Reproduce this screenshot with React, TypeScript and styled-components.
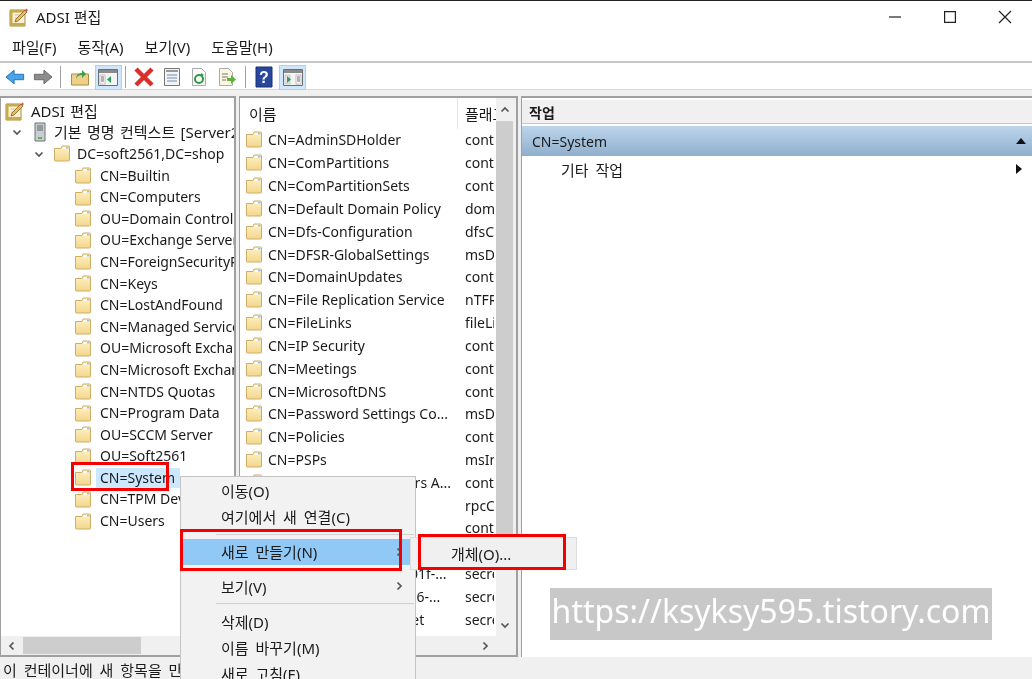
import React from "react";
import styled, { createGlobalStyle } from "styled-components";

const Global = createGlobalStyle`
  html, body { margin: 0; padding: 0; background: #fff; }
  * { box-sizing: border-box; }
  body { font-family: "Noto Sans", "Noto Sans CJK KR", sans-serif; font-size: 14px; color: #1a1a1a; }
`;

const Page = styled.div`
  position: relative; width: 1032px; height: 679px; overflow: hidden;
  display: flex; flex-direction: column; background: #fff; border-top: 1px solid #222;
  filter: blur(0.3px);
`;
const TitleBar = styled.div`
  height: 33px; display: flex; align-items: center; padding: 0 0 2px 9px; gap: 7px; font-size: 15px;
`;
const WindowButtons = styled.div`margin-left: auto; display: flex;`;
const WinBtn = styled.div`
  width: 55px; height: 32px; display: flex; align-items: center; justify-content: center;
`;
const MenuBar = styled.div`
  height: 29px; display: flex; align-items: center; padding: 0 0 2px 12px; gap: 21px; font-size: 15px;
  border-bottom: 2px solid #c8c8c8;
`;
const ToolBar = styled.div`
  height: 27px; display: flex; align-items: center; padding: 2px 0 0 5px; gap: 2px;
  border-bottom: 1px solid #d8d8d8;
`;
const ArrowSlot = styled.div<{ $w: number }>`width: ${(p) => p.$w}px; height: 20px; display: flex; flex: none;`;
const ToolBtn = styled.div<{ $on?: boolean }>`
  width: ${(p) => (p.$on ? 27 : 25.5)}px; height: 25px; display: flex; align-items: center; justify-content: center; flex: none;
  background: ${(p) => (p.$on ? "#cfe6fb" : "transparent")};
  border: 1px solid ${(p) => (p.$on ? "#a8d2f5" : "transparent")};
`;
const ToolSep = styled.div<{ $ml?: number }>`
  width: 1px; height: 22px; background: #a0a0a0; flex: none;
  margin: 0 4px 0 ${(p) => p.$ml ?? 1}px;
`;
const Workspace = styled.div`
  flex: 1; min-height: 0; background: #f0f0f0; padding-top: 6px;
  display: grid; grid-template-columns: 236px 279px 1fr; column-gap: 3px;
`;
const Pane = styled.div<{ $open?: boolean }>`
  position: relative; background: #fff; border-top: 2px solid #a0a0a0; border-left: 1px solid #a0a0a0;
  border-right: ${(p) => (p.$open ? "0" : "2px solid #a0a0a0")};
  border-bottom: ${(p) => (p.$open ? "0" : "2px solid #a0a0a0")}; min-width: 0;
  display: flex; flex-direction: column; overflow: hidden;
`;
const TreeBody = styled.div`flex: 1; min-height: 0; padding-top: 2px; overflow: hidden;`;
const TreeRow = styled.div<{ $depth: number }>`
  height: 21.6px; display: flex; align-items: center; white-space: nowrap; font-size: 14px;
  padding-left: ${(p) => p.$depth}px;
`;
const Twisty = styled.div`width: 15px; height: 16px; display: flex; align-items: center; justify-content: center; flex: none;`;
const RowIcon = styled.div<{ $w: number; $pad?: number }>`
  width: ${(p) => p.$w}px; padding-left: ${(p) => p.$pad ?? 0}px; flex: none; display: flex; align-items: center;
`;
const RowLabel = styled.span<{ $sel?: boolean; $kr?: boolean; $gap?: number }>`
  background: ${(p) => (p.$sel ? "#cce8ff" : "transparent")};
  padding: 0 5px 0 ${(p) => p.$gap ?? 0}px; line-height: 20px;
  font-size: ${(p) => (p.$kr ? 15 : 14)}px; word-spacing: ${(p) => (p.$kr ? 1.5 : 0)}px;
`;
const ScrollH = styled.div<{ $end?: boolean }>`
  height: 19px; flex: none; background: #f0f0f0; display: flex; align-items: center;
  justify-content: ${(p) => (p.$end ? "flex-end" : "flex-start")}; padding-right: ${(p) => (p.$end ? 20 : 0)}px;
`;
const ScrollArrow = styled.div`width: 22px; flex: none; display: flex; justify-content: center; align-items: center;`;
const ScrollThumbH = styled.div`width: 118px; height: 17px; background: #cdcdcd;`;
const ListWrap = styled.div`flex: 1; min-height: 0; display: flex;`;
const ListMain = styled.div`flex: 1; min-width: 0; overflow: hidden; background: #fff;`;
const ListHeader = styled.div`height: 30.5px; display: grid; grid-template-columns: 217px 1fr; align-items: center;`;
const HeaderCell = styled.div<{ $divider?: boolean }>`
  height: 100%; display: flex; align-items: center; padding-left: ${(p) => (p.$divider ? 7 : 9)}px;
  border-left: ${(p) => (p.$divider ? "1px solid #e5e5e5" : "0")}; overflow: hidden; white-space: nowrap; font-size: 15px;
`;
const ListRow = styled.div`
  height: 22.83px; display: grid; grid-template-columns: 217px 1fr; align-items: center; white-space: nowrap;
  font-size: 14px;
`;
const NameCell = styled.div`display: flex; align-items: center; padding-left: 5px; overflow: hidden;`;
const ClassCell = styled.div`margin-left: 8px; margin-right: 2px; overflow: hidden;`;
const ScrollV = styled.div`width: 20px; flex: none; background: #f0f0f0; display: flex; flex-direction: column;`;
const ScrollThumbV = styled.div`width: 17px; height: 414px; background: #cdcdcd;`;
const ScrollEnd = styled.div`width: 17px; height: 23px; flex: none; display: flex; align-items: center; justify-content: center;`;
const ScrollFill = styled.div`flex: 1;`;
const ActionsTitle = styled.div`
  height: 26px; background: #f0f0f0; border-top: 2px solid #fff; border-bottom: 1px solid #c8c8c8;
  padding-left: 7px; display: flex; align-items: center; font-weight: 700; font-size: 14px;
`;
const ActionsSection = styled.div`
  margin-top: 2px; height: 30px; display: flex; align-items: center; justify-content: space-between;
  padding: 0 6px 0 10px; background: linear-gradient(#bdd5eb, #90afcd); font-size: 14px;
`;
const ActionItem = styled.div`
  height: 26px; display: flex; align-items: center; justify-content: space-between;
  padding: 0 10px 0 39px; font-size: 15px; word-spacing: 3px;
`;
const StatusBar = styled.div`
  height: 22px; flex: none; background: #f0f0f0; padding: 2px 0 0 3px; font-size: 15px; word-spacing: 3px; white-space: nowrap; overflow: hidden;
`;
const ContextMenu = styled.div`
  position: absolute; left: 180px; top: 475px; width: 236px; height: 220px;
  background: #f2f2f2; border: 1px solid #c4c4c4;
`;
const MenuItem = styled.div<{ $hover?: boolean }>`
  height: 26.3px; display: flex; align-items: center; justify-content: space-between;
  padding: 0 11px 0 40px; font-size: 15px; word-spacing: 3px; background: ${(p) => (p.$hover ? "#90c8f6" : "transparent")};
`;
const MenuSep = styled.div<{ $blank?: boolean }>`
  height: 1px; background: ${(p) => (p.$blank ? "transparent" : "#d0d0d0")};
  margin: ${(p) => (p.$blank ? "3px" : "4px")} 1px 4px 35px;
`;
const SubMenu = styled.div`
  position: absolute; left: 410px; top: 536px; width: 167px; height: 33px; background: #f0f0f0;
  border: 1px solid #dcdcdc; display: flex; align-items: center; padding-left: 40px; font-size: 15px;
`;
const RedBox = styled.div<{ $l: number; $t: number; $w: number; $h: number }>`
  position: absolute; left: ${(p) => p.$l}px; top: ${(p) => p.$t}px; width: ${(p) => p.$w}px; height: ${(p) => p.$h}px;
  border: 3px solid #f40000; pointer-events: none;
`;
const Watermark = styled.div`
  position: absolute; left: 550px; top: 587px; width: 442px; height: 52px; background: #c8c8c8; color: #fff;
  font-size: 32px; padding-bottom: 7px; display: flex; align-items: center; justify-content: center; white-space: nowrap;
  font-family: "Noto Sans", sans-serif;
`;

const Folder = () => (
  <svg width="18" height="17" viewBox="0 0 18 17">
    <defs>
      <linearGradient id="fg" x1="0" y1="0" x2="0" y2="1"><stop offset="0" stopColor="#fdf2c4" /><stop offset="1" stopColor="#f3d68c" /></linearGradient>
    </defs>
    <path d="M1.5 3.5V15a1 1 0 0 0 1 1h13a1 1 0 0 0 1-1V2a1 1 0 0 0-1-1H9L8 3.5Z" fill="url(#fg)" stroke="#d0ad66" />
    <path d="M9.5 2h6v2h-6z" fill="#fff" opacity=".8" />
    <path d="M13 2h2.500v1.500H13z" fill="#8cc0e8" />
  </svg>
);
const Chevron = ({ dir, color = "#555", size = 10 }: { dir: "l" | "r" | "u" | "d"; color?: string; size?: number }) => {
  const d = { l: "M6.500 1.500 3 5l3.500 3.500", r: "M3.500 1.500 7 5 3.500 8.500", u: "M1.500 6.500 5 3l3.500 3.500", d: "M1.500 3.500 5 7l3.500-3.500" }[dir];
  return <svg width={size} height={size} viewBox="0 0 10 10"><path d={d} fill="none" stroke={color} strokeWidth="1.700" /></svg>;
};
const Notebook = ({ s = 20 }: { s?: number }) => (
  <svg width={s} height={s} viewBox="0 0 20 20">
    <path d="M1 3h15v16H1z" fill="#f9f1cf" stroke="#a58a3c" />
    <path d="M1 3h15v2.500H3.500V16H16v3H1z" fill="#c9a94e" />
    <path d="M6 8h6M6 11h4" stroke="#c6c6ae" />
    <path d="m6 15 1-3 9-9 2 2-9 9Z" fill="#e7c05a" stroke="#8a5a2b" strokeWidth=".8" />
    <path d="m15.500 3.500 2-2 1.500 1.500-2 2Z" fill="#d9534f" />
  </svg>
);
const Server = () => (
  <svg width="14" height="20" viewBox="0 0 14 20">
    <path d="M2 1h10v18H2z" fill="#c9ced3" stroke="#6b7278" />
    <path d="M4 4h6M4 6h6M4 8h6" stroke="#5d6469" />
    <path d="M5 15h4v2H5z" fill="#63b04b" />
  </svg>
);
const Arrow = ({ left, color, edge }: { left?: boolean; color: string; edge: string }) => (
  <svg width="20" height="20" viewBox="0 0 22 20" style={{ transform: left ? "none" : "scaleX(-1)" }}>
    <path d="M1 10 10 2.500V7h10.500v6H10v4.500Z" fill={color} stroke={edge} />
  </svg>
);
const PanelIcon = ({ right }: { right?: boolean }) => (
  <svg width="22" height="20" viewBox="0 0 22 20">
    <path d="M1.500 2.500h19v16h-19z" fill="#f4f4f4" stroke="#6f6f6f" />
    <path d="M2 3h18v3H2z" fill="#8a8a8a" />
    {right ? (
      <>
        <path d="M3 8h5v9H3z" fill="#e8e8e8" stroke="#aaa" strokeWidth=".5" />
        <path d="m5 9 4 3.500L5 16Z" fill="#2aa05a" />
        <path d="M14 8h5v9h-5z" fill="#fff" stroke="#888" strokeWidth=".5" />
        <path d="M15 10h3M15 12h3M15 14h3" stroke="#667" />
      </>
    ) : (
      <>
        <path d="M3 8h5v9H3z" fill="#fff" stroke="#888" strokeWidth=".5" />
        <path d="M4 10h3M4 12h3M4 14h3" stroke="#667" />
        <path d="M14 9l-4 3.500 4 3.500Z" fill="#2aa05a" />
      </>
    )}
  </svg>
);

const treeItems = [
  "CN=Builtin", "CN=Computers", "OU=Domain Controllers", "OU=Exchange Servers", "CN=ForeignSecurityPrincipals",
  "CN=Keys", "CN=LostAndFound", "CN=Managed Service Accounts", "OU=Microsoft Exchange", "CN=Microsoft Exchange System",
  "CN=NTDS Quotas", "CN=Program Data", "OU=SCCM Server", "OU=Soft2561", "CN=System", "CN=TPM Devices", "CN=Users",
];
const listItems: [string, string][] = [
  ["CN=AdminSDHolder", "container"], ["CN=ComPartitions", "container"], ["CN=ComPartitionSets", "container"],
  ["CN=Default Domain Policy", "domainPolicy"], ["CN=Dfs-Configuration", "dfsConfiguration"],
  ["CN=DFSR-GlobalSettings", "msDFSR"], ["CN=DomainUpdates", "container"], ["CN=File Replication Service", "nTFRSSettings"],
  ["CN=FileLinks", "fileLinkTracking"], ["CN=IP Security", "container"], ["CN=Meetings", "container"],
  ["CN=MicrosoftDNS", "container"], ["CN=Password Settings Co...", "msDS-Password"], ["CN=Policies", "container"],
  ["CN=PSPs", "msImaging"], ["CN=RAS and IAS Servers A...", "container"], ["CN=RpcServices", "rpcContainer"],
  ["CN=WinsockServices", "container"], ["CN=WMIPolicy", "container"], ["CN=BCKUPKEY_a5c1e01f-...", "secret"],
  ["CN=BCKUPKEY_3f1eab6-...", "secret"], ["CN=BCKUPKEY_P Secret", "secret"],
];

export default function App() {
  return (
    <Page>
      <Global />
      <TitleBar>
        <Notebook />
        <span>ADSI 편집</span>
        <WindowButtons>
          <WinBtn><svg width="12" height="12" viewBox="0 0 12 12"><path d="M0 6h12" stroke="#222" strokeWidth="1.200" /></svg></WinBtn>
          <WinBtn><svg width="12" height="12" viewBox="0 0 12 12"><path d="M.6.6h10.800v10.800H.6z" fill="none" stroke="#222" strokeWidth="1.200" /></svg></WinBtn>
          <WinBtn><svg width="14" height="14" viewBox="0 0 14 14"><path d="m1 1 12 12M13 1 1 13" stroke="#222" strokeWidth="1.200" /></svg></WinBtn>
        </WindowButtons>
      </TitleBar>
      <MenuBar>
        <span>파일(F)</span><span>동작(A)</span><span>보기(V)</span><span>도움말(H)</span>
      </MenuBar>
      <ToolBar>
        <ArrowSlot $w={26}><Arrow left color="#4ba3e8" edge="#1f6fb5" /></ArrowSlot>
        <ArrowSlot $w={24}><Arrow color="#8c8c8c" edge="#666" /></ArrowSlot>
        <ToolSep />
        <ToolBtn><svg width="20" height="20" viewBox="0 0 20 20"><path d="M1.500 7h17v11h-17z" fill="#eed08a" stroke="#b08c45" /><path d="M6 12c0-4 3-6 6-6V3l4 4-4 4V8c-3 0-5 1-6 4Z" fill="#3da045" /></svg></ToolBtn>
        <ToolBtn $on><PanelIcon /></ToolBtn>
        <ToolSep />
        <ToolBtn><svg width="22" height="22" viewBox="0 0 22 22"><path d="m3 3 16 16M19 3 3 19" stroke="#d9302a" strokeWidth="4.500" /></svg></ToolBtn>
        <ToolBtn><svg width="20" height="20" viewBox="0 0 20 20"><path d="M2.500 1.500h15v17h-15z" fill="#f4f4f4" stroke="#777" /><path d="M4 3h12v2H4z" fill="#999" /><path d="M5 8h10M5 11h10M5 14h10" stroke="#6a8fb5" /></svg></ToolBtn>
        <ToolBtn><svg width="20" height="20" viewBox="0 0 20 20"><path d="M3.500 1.500h9l4 4v13h-13z" fill="#fafafa" stroke="#aaa" /><circle cx="10" cy="12" r="4" fill="none" stroke="#2f9a44" strokeWidth="2" /><path d="m12 6 3 2-3 2Z" fill="#2f9a44" /></svg></ToolBtn>
        <ToolBtn><svg width="20" height="20" viewBox="0 0 20 20"><path d="M2.500 1.500h9l4 4v13h-13z" fill="#fbf6e0" stroke="#aaa" /><path d="M5 7h6M5 10h6M5 13h4" stroke="#777" /><path d="M10 11h4V8l5 4.500-5 4.500v-3h-4Z" fill="#5cb53a" /></svg></ToolBtn>
        <ToolSep $ml={3} />
        <ToolBtn><svg width="18" height="22" viewBox="0 0 18 22"><path d="M1 1h16v20H1z" fill="#27479f" stroke="#1a2f70" /><text x="9" y="17" fontSize="16" fontWeight="700" fill="#fff" textAnchor="middle" fontFamily="Liberation Sans">?</text></svg></ToolBtn>
        <ToolBtn $on><PanelIcon right /></ToolBtn>
      </ToolBar>
      <Workspace>
        <Pane>
          <TreeBody>
            <TreeRow $depth={4}><RowIcon $w={26}><Notebook /></RowIcon><RowLabel $kr>ADSI 편집</RowLabel></TreeRow>
            <TreeRow $depth={8}><Twisty><Chevron dir="d" /></Twisty><RowIcon $w={30} $pad={9}><Server /></RowIcon><RowLabel $kr>기본 명명 컨텍스트 [Server2019]</RowLabel></TreeRow>
            <TreeRow $depth={30}><Twisty><Chevron dir="d" /></Twisty><RowIcon $w={31} $pad={7}><Folder /></RowIcon><RowLabel>DC=soft2561,DC=shop</RowLabel></TreeRow>
            {treeItems.map((t) => (
              <TreeRow key={t} $depth={73}>
                <RowIcon $w={22}>
                  <Folder />
                </RowIcon>
                <RowLabel $sel={t === "CN=System"} $gap={4}>{t}</RowLabel>
              </TreeRow>
            ))}
          </TreeBody>
          <ScrollH>
            <ScrollArrow><Chevron dir="l" /></ScrollArrow>
            <ScrollThumbH />
          </ScrollH>
        </Pane>
        <Pane>
          <ListWrap>
            <ListMain>
              <ListHeader>
                <HeaderCell>이름</HeaderCell>
                <HeaderCell $divider>플래그</HeaderCell>
              </ListHeader>
              {listItems.map(([n, c]) => (
                <ListRow key={n}>
                  <NameCell><RowIcon $w={23}><Folder /></RowIcon>{n}</NameCell>
                  <ClassCell>{c}</ClassCell>
                </ListRow>
              ))}
            </ListMain>
            <ScrollV>
              <ScrollEnd><Chevron dir="u" /></ScrollEnd>
              <ScrollThumbV />
              <ScrollFill />
              <ScrollEnd><Chevron dir="d" /></ScrollEnd>
            </ScrollV>
          </ListWrap>
          <ScrollH $end>
            <ScrollArrow><Chevron dir="r" /></ScrollArrow>
          </ScrollH>
        </Pane>
        <Pane $open>
          <ActionsTitle>작업</ActionsTitle>
          <ActionsSection>
            <span>CN=System</span>
            <svg width="10" height="6" viewBox="0 0 10 6"><path d="M0 6 5 0l5 6Z" fill="#111" /></svg>
          </ActionsSection>
          <ActionItem>
            <span>기타 작업</span>
            <svg width="6" height="10" viewBox="0 0 6 10"><path d="m0 0 6 5-6 5Z" fill="#111" /></svg>
          </ActionItem>
        </Pane>
      </Workspace>
      <StatusBar>이 컨테이너에 새 항목을 만듭니다.</StatusBar>
      <ContextMenu>
        <MenuItem>이동(O)</MenuItem>
        <MenuItem>여기에서 새 연결(C)</MenuItem>
        <MenuSep />
        <MenuItem $hover>새로 만들기(N)<Chevron dir="r" /></MenuItem>
        <MenuSep $blank />
        <MenuItem>보기(V)<Chevron dir="r" /></MenuItem>
        <MenuSep />
        <MenuItem>삭제(D)</MenuItem>
        <MenuItem>이름 바꾸기(M)</MenuItem>
        <MenuItem>새로 고침(F)</MenuItem>
      </ContextMenu>
      <SubMenu>개체(O)...</SubMenu>
      <RedBox $l={71} $t={461} $w={98} $h={29} />
      <RedBox $l={180} $t={528} $w={222} $h={42} />
      <RedBox $l={418} $t={533} $w={148} $h={36} />
      <Watermark>https://ksyksy595.tistory.com</Watermark>
    </Page>
  );
}
